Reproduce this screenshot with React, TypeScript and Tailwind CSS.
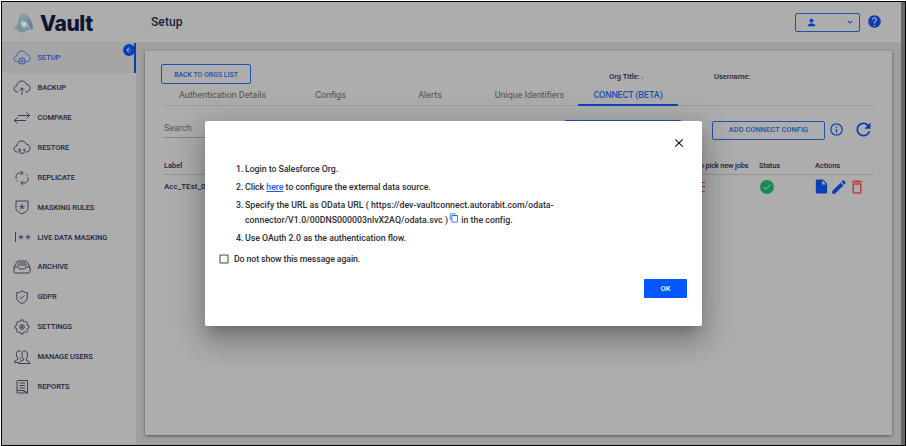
import type { ReactNode } from "react";
import { MdPerson, MdHelp, MdRefresh, MdEdit, MdDeleteOutline, MdInsertDriveFile, MdInfoOutline, MdArrowBack, MdClose, MdContentCopy, MdExpandMore, MdCheckBoxOutlineBlank } from "react-icons/md";

const cloud = "M5.2 13H4.4C2.4 13 1 11.7 1 9.9 1 8.2 2.2 7 3.8 6.9 4.1 4 6.1 2 8.8 2c2.3 0 4 1.3 4.7 3.3C15.500 5.500 17 7 17 9.100 17 11.400 15.500 13 13.300 13H12.600";

const icons: Record<string, ReactNode> = {
  setup: (
    <>
      <path d={cloud} />
      <circle cx="9" cy="12" r="3" />
      <circle cx="9" cy="12" r="1.1" />
      <path d="M9 8v1M9 15v1M5 12h1M12 12h1M6.200 9.200l.7.7M11.100 14.100l.7.7M11.800 9.200l-.7.7M6.900 14.100l-.7.700" />
    </>
  ),
  backup: (
    <>
      <path d={cloud} />
      <path d="M9 16V8.800M6.600 11.200 9 8.800l2.400 2.400" />
    </>
  ),
  compare: <path d="M5 6.500h11.500M13.500 3.500l3 3-3 3M13 11.500H1.500M4.500 8.500l-3 3 3 3" />,
  restore: (
    <>
      <path d={cloud} />
      <path d="M7.400 10.500a2.400 2.400 0 1 0 3.200 0M7.200 12.500V10.300H5.200M10.800 10.300h1.700" />
    </>
  ),
  replicate: (
    <path d="M3.300 9.800C2.300 6.500 4 4 6.500 4H10M8 1.800 10.200 4 8 6.200M14.700 8.200c1 3.300-.7 5.800-3.200 5.800H8M10 11.800 7.800 14l2.200 2.200M3.600 11.300l.8 1.300M14.400 6.700l-.8-1.300" />
  ),
  masking: (
    <>
      <path d="M3 3h12v7.500c0 2.400-2.700 3.800-6 5.300-3.300-1.500-6-2.900-6-5.300z" />
      <path d="M9 5.800v3.200M9 9l-2.700-.8M9 9l2.700-.8M9 9l-1.800 2.400M9 9l1.800 2.400" />
    </>
  ),
  live: (
    <>
      <path d="M2.500 4v10" />
      <path d="M8 6.600v2.600M8 9.200l-2.400-.7M8 9.200l2.400-.7M8 9.200l-1.500 2M8 9.200l1.500 2M15 6.600v2.600M15 9.200l-2.400-.7M15 9.200l2.400-.7M15 9.200l-1.500 2M15 9.200l1.500 2" />
    </>
  ),
  archive: (
    <>
      <path d="M1 9h4l1.500 2h5L13 9h4v4.500q0 1.500-1.500 1.500h-13Q1 15 1 13.500zM1 9l3-5.200Q4.500 3 5.500 3h7q1 0 1.500.8L17 9" />
      <path d="M5 5h8M4 7h10" />
    </>
  ),
  gdpr: (
    <>
      <path d="M9 2.800c1.500 1.200 3.200 1.800 5.300 1.900v4.800c0 2.800-2.100 4.700-5.300 6-3.200-1.300-5.300-3.200-5.300-6V4.700C5.800 4.600 7.500 4 9 2.800z" />
      <path d="m6.600 9 1.700 1.700 3.200-3.300" />
    </>
  ),
  settings: (
    <>
      <path d="m7.800 2.500h2.400l.4 1.700 1.300.6 1.500-.9 1.700 1.700-.9 1.500.5 1.200 1.800.5v2.400l-1.800.4-.5 1.300.9 1.500-1.700 1.700-1.500-.9-1.300.5-.4 1.800H7.800l-.4-1.800-1.300-.5-1.500.9-1.700-1.700.9-1.500-.5-1.300L1.500 11.200V8.800l1.800-.5.5-1.200-.9-1.500 1.700-1.700 1.500.9 1.300-.6z" transform="translate(.5 -.45) scale(.94)" />
      <circle cx="9" cy="9" r="2.300" />
      <circle cx="9" cy="9" r=".8" />
    </>
  ),
  users: (
    <path d="M5.500 15.500H17q0-2.300-3.800-3.300v-1.300C14.300 9.500 14.600 8 14.500 6c0-2-1.200-3-2.800-3S9 4 9 6c-.1 2 .3 3.500 1.300 4.900v1.300Q6 13.200 5.500 15.500M5 14.500H1.500q0-2.200 3.300-3v-1.700C3.700 8.700 3.300 7.500 3.400 5.700c0-1.900 1-2.900 2.500-2.900q1.600 0 2.300 1.300M7.500 9.700v1.500" />
  ),
  reports: (
    <>
      <path d="M4 14.500v-11Q4 2.500 5 2.500h9.500V15H5Q4 15 4 14M4.200 12.500H11l3.500 2.500M11 12.500V14" />
      <path d="M6.500 5h5.500M6.500 7.500h5.500M6.500 10h5.500" />
    </>
  ),
};

const menu = [
  ["setup", "SETUP"],
  ["backup", "BACKUP"],
  ["compare", "COMPARE"],
  ["restore", "RESTORE"],
  ["replicate", "REPLICATE"],
  ["masking", "MASKING RULES"],
  ["live", "LIVE DATA MASKING"],
  ["archive", "ARCHIVE"],
  ["gdpr", "GDPR"],
  ["settings", "SETTINGS"],
  ["users", "MANAGE USERS"],
  ["reports", "REPORTS"],
];

function Logo() {
  return (
    <svg viewBox="0 0 22 22" className="h-[22px] w-[22px] shrink-0">
      <defs>
        <linearGradient id="vaultLeft" x1="0" y1="1" x2="1" y2="0">
          <stop offset="0" stopColor="#459083" />
          <stop offset="1" stopColor="#86a3ab" />
        </linearGradient>
        <linearGradient id="vaultRight" x1="0" y1="0" x2="1" y2="1">
          <stop offset="0" stopColor="#8fa9ae" />
          <stop offset="1" stopColor="#4d7791" />
        </linearGradient>
      </defs>
      <path d="M8.500 1.500Q12 1 14.500 3.500 19 8 20 15.500L18.500 18Q15.500 11 9 8z" fill="url(#vaultRight)" />
      <path d="M8.500 1.500Q5.500 6 4.500 12L1.500 15.500Q5 12 8 12L11 7 14 4Q11 1 8.500 1.500z" fill="url(#vaultLeft)" opacity=".6" />
      <path d="M1.500 15.500Q5 20.500 9.500 20.500 14 19.500 20 15.500L12 14 8 11.500Q4 12 1.500 15.500z" fill="#7c93a2" opacity=".75" />
      <path d="M8.500 1.500Q4.500 9 6 18.500M1.500 15.500Q8 14 10 20M20 15.500Q14 17 6 20" fill="none" stroke="#3f817f" strokeWidth=".5" opacity=".8" />
      <path d="M7.500 10.500h6.500l-3 5.500z" fill="#ccd1d2" />
    </svg>
  );
}

function Sidebar() {
  return (
    <aside className="flex w-[134px] shrink-0 flex-col bg-[#adadad]">
      <div className="flex h-[41px] items-center border-b border-[#a0a0a0] pl-[11px] pt-[2px]">
        <Logo />
        <span className="ml-[5px] font-['Inter',sans-serif] text-[21px] font-extrabold leading-none tracking-[-0.4px] text-[#0d1533]">Vault</span>
      </div>
      <nav className="relative flex flex-col">
        {menu.map(([icon, label], i) => (
          <a
            key={icon}
            className={`flex h-[29.9px] items-center pl-[11px] ${i === 0 ? "border-r-2 border-[#0a3fb4] bg-[#a5a5a5] text-[#2550ae]" : "text-[#1d2540]"}`}
          >
            <svg viewBox="0 0 18 18" fill="none" stroke="currentColor" strokeWidth=".8" className="h-[18px] w-[18px]">
              {icons[icon]}
            </svg>
            <span className="ml-[6.500px] whitespace-nowrap text-[7.500px] font-medium tracking-[-0.07px]">{label}</span>
          </a>
        ))}
        <span className="absolute right-[1px] top-[1px] flex h-3 w-3 items-center justify-center rounded-full bg-[#0a3fb4] text-[#b8c4dc]">
          <MdArrowBack size={8} />
        </span>
      </nav>
    </aside>
  );
}

function Header() {
  return (
    <header className="flex h-10 shrink-0 items-center bg-[#adadad] pl-[15px] pr-[19px] text-[#161e35]">
      <h1 className="text-[12px] font-medium tracking-[0.1px]">Setup</h1>
      <div className="ml-auto flex h-[19px] w-[65px] items-center justify-between rounded-[2px] border border-[#2450b0] pl-[10px] pr-[4px] text-[#0a3fb4]">
        <MdPerson size={11} />
        <MdExpandMore size={10} />
      </div>
      <MdHelp size={15} className="-mt-[2px] ml-[7px] text-[#0a3fb4]" />
    </header>
  );
}

function OrgCard() {
  return (
    <section className="mx-[9px] mt-[9px] flex h-[384px] flex-col bg-[#adadad] pl-[16px] pr-[18px] pt-[13px] shadow-[0_1px_3px_rgba(0,0,0,0.45)]">
      <div className="flex h-[20px] shrink-0 items-start text-[7.500px] font-medium text-[#1d2540]">
        <button className="h-5 w-[90px] rounded-[2px] border border-[#2450b0] pt-[3px] text-[7px] tracking-[-0.05px] text-[#2450b0]">BACK TO ORGS LIST</button>
        <span className="ml-[358px] mt-[8px] w-[105px] whitespace-nowrap">Org Title: <span className="text-[5px]">‹</span></span>
        <span className="mt-[8px]">Username:</span>
      </div>
      <div className="ml-[2px] flex h-[22px] shrink-0 items-center border-b border-[#9e9e9e] text-[9px] text-[#505050]">
        <span className="w-[119px] pt-[2px] text-center tracking-[-0.05px]">Authentication Details</span>
        <span className="w-[97px] pt-[2px] text-center">Configs</span>
        <span className="w-[102px] pt-[2px] text-center">Alerts</span>
        <span className="w-[97px] pt-[2px] text-center tracking-[-0.05px]">Unique Identifiers</span>
        <span className="mb-[-1px] flex h-[22px] w-[100px] items-center justify-center border-b-2 border-[#0f43b3] pt-[3px] font-medium tracking-[-0.15px] text-[#2450b0]">CONNECT (BETA)</span>
      </div>
      <div className="ml-[2px] mt-[14px] flex h-[20px] shrink-0 items-center">
        <div className="h-[16px] w-[110px] border-b border-[#878787] text-[9px] leading-[13px] text-[#555]"><span className="pl-px">Search</span></div>
        <span className="ml-[291px] h-[20px] w-[118px] rounded-[2px] border border-[#2450b0]" />
        <button className="ml-[30px] h-[19px] w-[113px] whitespace-nowrap rounded-[2px] border border-[#2450b0] text-[7.500px] font-medium text-[#2450b0]">ADD CONNECT CONFIG</button>
        <MdInfoOutline size={15} className="-mt-[2px] ml-[4px] shrink-0 text-[#0f43b3]" />
        <MdRefresh size={21} className="-mt-[2px] ml-[9px] shrink-0 text-[#0a3fb4]" />
      </div>
      <div className="ml-[2px] mt-[15px] flex h-[20px] shrink-0 items-center border-b border-[#969696] pl-px pt-[2px] text-[7.500px] font-medium text-[#1d2540]">
        <span className="w-[475px]">Label</span>
        <span className="w-[120px] whitespace-nowrap pl-[58.500px] tracking-[-0.2px]">to pick new jobs</span>
        <span className="w-[56px] tracking-[-0.08px]">Status</span>
        <span className="tracking-[-0.08px]">Actions</span>
      </div>
      <div className="ml-[2px] flex h-[25px] shrink-0 items-center pb-[2px] text-[8px] font-medium text-[#1d2540]">
        <span className="w-[530px] pl-px">Acc_TEst_01</span>
        <span className="flex h-[10px] w-[12px] flex-col justify-between">
          <i className="h-px bg-[#b03a40]" />
          <i className="h-px bg-[#b03a40]" />
          <i className="h-px bg-[#b03a40]" />
        </span>
        <span className="ml-[54.500px] flex h-[14px] w-[14px] items-center justify-center rounded-full bg-[#168b55] text-[#a8bdb2]">
          <svg viewBox="0 0 14 14" className="h-[14px] w-[14px]" fill="none" stroke="currentColor" strokeWidth=".9">
            <path d="m3.500 7 2.300 2.400 4.700-5" />
          </svg>
        </span>
        <MdInsertDriveFile size={17} className="ml-[39px] text-[#0a3fb4]" />
        <MdEdit size={18} className="text-[#0a3fb4]" />
        <MdDeleteOutline size={18} className="text-[#b84045]" />
      </div>
    </section>
  );
}

function ConnectDialog() {
  return (
    <div className="absolute left-[205px] top-[121px] h-[205px] w-[497px] rounded-[2px] bg-white text-[8.750px] font-medium text-[#2c2c32] shadow-[0_8px_11px_-5px_rgba(0,0,0,0.2),0_17px_27px_2px_rgba(0,0,0,0.16),0_6px_33px_6px_rgba(0,0,0,0.14)]">
      <div className="flex justify-end pr-[16px] pt-[15px]">
        <MdClose size={14} className="text-[#111]" />
      </div>
      <ol className="mt-[10.500px] flex flex-col pl-[31px]">
        <li className="flex h-[18px] items-center"><span className="w-[9px]">1.</span><span className="tracking-[-0.05px]">Login to Salesforce Org.</span></li>
        <li className="flex h-[18px] items-center"><span className="w-[9px]">2.</span><span className="tracking-[-0.03px]">Click <a className="text-[#1a5cff] underline">here</a> to configure the external data source.</span></li>
        <li className="flex h-[32.500px] pt-[1.500px]">
          <span className="w-[9px] leading-[15px]">3.</span>
          <span className="whitespace-nowrap leading-[15px] tracking-[0.03px]">
            Specify the URL as OData URL ( https://dev-vaultconnect.autorabit.com/odata-
            <br />
            connector/V1.0/00DNS000003nlvX2AQ/odata.svc )<MdContentCopy size={10} className="-mt-[2px] mb-[4px] ml-px inline text-[#1a5cff]" /> in the config.
          </span>
        </li>
        <li className="flex h-[18px] items-center"><span className="w-[9px]">4.</span>Use OAuth 2.0 as the authentication flow.</li>
      </ol>
      <label className="mt-[3px] flex h-[18px] items-center pl-[13px] tracking-[-0.1px]">
        <MdCheckBoxOutlineBlank size={12} className="mr-[4px] text-[#444]" />
        Do not show this message again.
      </label>
      <div className="mt-[11px] flex justify-end pr-[15px]">
        <button className="h-[19px] w-[43px] rounded-[1px] bg-[#0057ff] pt-px text-[7.500px] font-medium text-white">OK</button>
      </div>
    </div>
  );
}

export default function App() {
  return (
    <div className="h-[446px] w-[906px] bg-white pl-px pt-px font-['Roboto','Liberation_Sans',sans-serif] leading-tight">
      <div className="flex h-[445px] w-[905px] border border-black bg-[#9f9f9f]">
        <Sidebar />
        <main className="flex min-w-0 flex-1 flex-col">
          <Header />
          <OrgCard />
        </main>
        <div className="w-[4px] bg-[#686868]" />
      </div>
      <ConnectDialog />
    </div>
  );
}
